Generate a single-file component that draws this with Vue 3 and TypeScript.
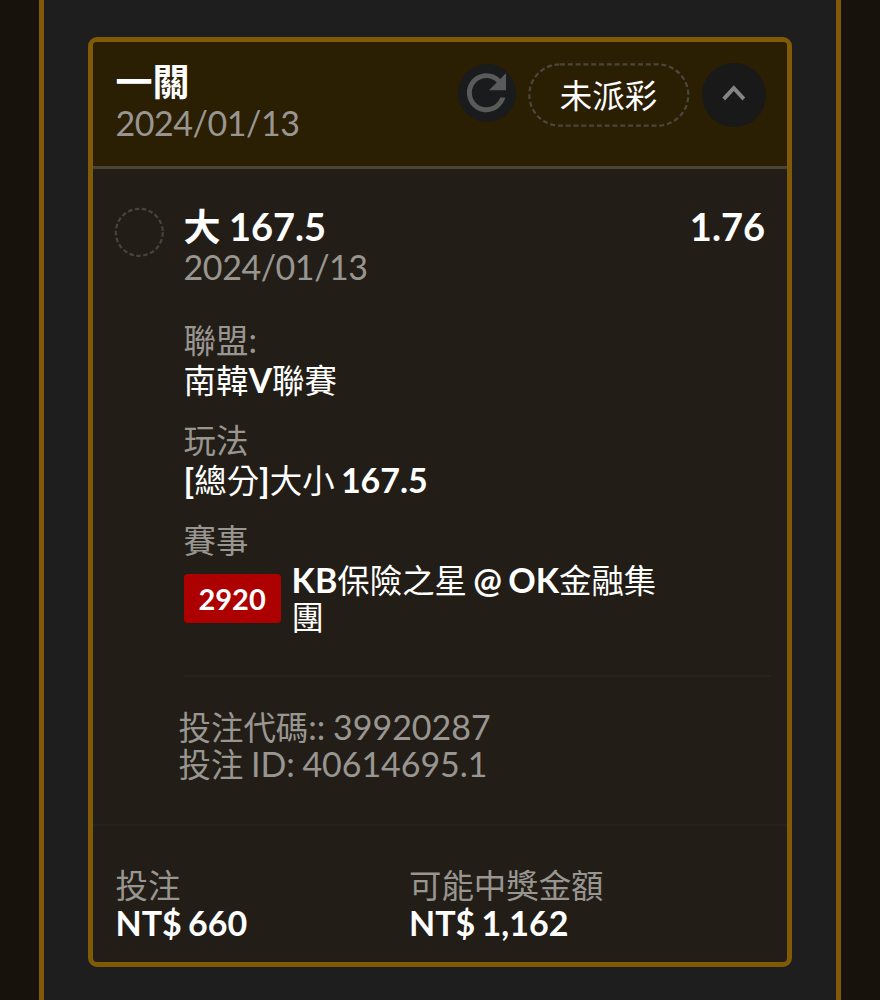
<script setup lang="ts">
import { h, type FunctionalComponent } from 'vue'

/* Renders mixed Latin / Han text, wrapping each Han run so it can be sized separately. */
const Mixed: FunctionalComponent<{ t: string }> = (props) =>
  props.t
    .split(/([\u4e00-\u9fff]+)/)
    .filter((part) => part.length > 0)
    .map((part) => (/[\u4e00-\u9fff]/.test(part) ? h('span', { class: 'han' }, part) : part))
Mixed.props = ['t']

const bet = {
  title: '一關',
  date: '2024/01/13',
  status: '未派彩',
  pick: '大 167.5',
  odds: '1.76',
  code: '投注代碼:: 39920287',
  id: '投注 ID: 40614695.1',
}
const details = [
  { label: '聯盟:', value: '南韓V聯賽' },
  { label: '玩法', value: '[總分]大小 167.5' },
]
const teamLines = ['KB保險之星 @ OK金融集', '團']
const totals = [
  { label: '投注', value: 'NT$ 660' },
  { label: '可能中獎金額', value: 'NT$ 1,162' },
]
</script>

<template>
  <main class="page">
    <section class="panel">
      <article class="card">
        <header class="head">
          <div class="head-text">
            <h1 class="title"><Mixed :t="bet.title" /></h1>
            <p class="muted date">{{ bet.date }}</p>
          </div>
          <button class="refresh" aria-label="refresh">
            <svg width="58" height="58" viewBox="0 0 58 58">
              <path
                transform="translate(-0.8 -0.6) scale(2.44)"
                fill="#5a5a5a"
                d="M17.65 6.35C16.2 4.9 14.21 4 12 4c-4.42 0-7.99 3.58-7.99 8s3.57 8 7.99 8c3.73 0 6.84-2.55 7.73-6h-2.08c-.82 2.33-3.04 4-5.65 4-3.31 0-6-2.69-6-6s2.69-6 6-6c1.66 0 3.14.69 4.22 1.78L13 11h7V4l-2.35 2.35z"
              />
            </svg>
          </button>
          <div class="pill">
            <svg class="ring" width="162" height="64" viewBox="0 0 162 64">
              <rect x="1.3" y="1.3" width="159" height="61.4" rx="30.7" fill="none" stroke="#4a4740" stroke-width="2.2" stroke-dasharray="5 2.8" />
            </svg>
            <span><Mixed :t="bet.status" /></span>
          </div>
          <button class="toggle" aria-label="collapse">
            <svg width="64" height="64" viewBox="0 0 64 64">
              <path
                transform="translate(9 5.8) scale(1.9 2.05)"
                fill="#858585"
                d="M12 8l-6 6 1.41 1.41L12 10.83l4.59 4.58L18 14z"
              />
            </svg>
          </button>
        </header>

        <div class="body">
          <svg class="mark" width="50" height="50" viewBox="0 0 50 50">
            <circle cx="25.3" cy="25.3" r="23.5" fill="none" stroke="#464440" stroke-width="2.2" stroke-dasharray="4.6 2.43" />
          </svg>
          <div class="info">
            <div class="pick-row">
              <h2 class="title"><Mixed :t="bet.pick" /></h2>
              <strong class="title">{{ bet.odds }}</strong>
            </div>
            <p class="muted date">{{ bet.date }}</p>
            <dl class="details">
              <div v-for="d in details" :key="d.label" class="detail">
                <dt class="muted"><Mixed :t="d.label" /></dt>
                <dd class="value"><Mixed :t="d.value" /></dd>
              </div>
              <div class="detail">
                <dt class="muted"><Mixed t="賽事" /></dt>
                <dd class="match">
                  <span class="badge">2920</span>
                  <div class="value teams">
                    <div v-for="line in teamLines" :key="line"><Mixed :t="line" /></div>
                  </div>
                </dd>
              </div>
            </dl>
            <div class="codes">
              <p class="muted"><Mixed :t="bet.code" /></p>
              <p class="muted id"><Mixed :t="bet.id" /></p>
            </div>
          </div>
        </div>

        <footer class="foot">
          <div v-for="t in totals" :key="t.label">
            <p class="muted"><Mixed :t="t.label" /></p>
            <p class="value total">{{ t.value }}</p>
          </div>
        </footer>
      </article>
    </section>
  </main>
</template>

<style>
body {
  margin: 0;
  background: #17130c;
}
.han {
  font-size: 0.954em;
  line-height: 0;
}
</style>

<style scoped>
* {
  box-sizing: border-box;
}
.page {
  height: 1000px;
  padding: 0 39px;
  overflow: hidden;
  background: #17130c;
  color: #fff;
  font: 400 34px/37px Lato, 'Noto Sans CJK TC', sans-serif;
}
h1, h2, p, dl, dd {
  margin: 0;
}
button {
  border: 0;
  padding: 0;
  border-radius: 50%;
}
svg {
  display: block;
}
.panel {
  height: 1000px;
  padding: 37px 44px 0;
  background: #1e1e1e;
  border: solid #805a07;
  border-width: 0 5px;
}
.card {
  height: 930px;
  border: 5px solid #805a07;
  border-radius: 9px;
  background: #221e17;
  overflow: hidden;
}
.head {
  display: flex;
  align-items: flex-start;
  height: 127px;
  padding: 20px 21.5px 0 22.5px;
  background: #2a1e03;
  border-bottom: 3px solid #4b4535;
}
.head-text {
  flex: 1;
}
.title {
  font-size: 38px;
  line-height: 38px;
  font-weight: 700;
}
.title :deep(.han) {
  font-size: 0.975em;
}
.pick-row .title {
  word-spacing: -1px;
}
.muted {
  color: #999692;
  word-spacing: -1px;
}
.date {
  letter-spacing: -0.45px;
}
.head .muted {
  margin-top: 4px;
}
.refresh {
  width: 58px;
  height: 58px;
  margin: 2px 12px 0 0;
  background: #1a1b1d;
}
.pill {
  position: relative;
  width: 162px;
  height: 64px;
  margin: 1px 12px 0 0;
  text-align: center;
  line-height: 64px;
}
.ring {
  position: absolute;
  inset: 0;
}
.toggle {
  width: 64px;
  height: 64px;
  margin-top: 1px;
  background: #191919;
}
.body {
  display: flex;
  height: 655px;
  padding: 38px 16px 0 21px;
}
.mark {
  flex: none;
  margin-right: 19.6px;
}
.info {
  flex: 1;
}
.pick-row {
  display: flex;
  justify-content: space-between;
  padding-right: 6px;
  margin-bottom: 3px;
}
.details {
  display: flex;
  flex-direction: column;
  gap: 23px;
  height: 392px;
  padding-top: 36px;
  border-bottom: 2px solid #26231d;
}
.value {
  font-weight: 700;
  word-spacing: -2px;
}
.value :deep(.han) {
  font-weight: 400;
}
dt {
  margin-bottom: 3px;
}
.match {
  display: flex;
  align-items: flex-start;
}
.badge {
  flex: none;
  width: 97px;
  height: 49px;
  margin: 13px 11px 0 0;
  border-radius: 4px;
  background: #ad0000;
  text-align: center;
  font-size: 29px;
  line-height: 49px;
  font-weight: 700;
}
.teams {
  white-space: nowrap;
}
.codes {
  margin: 31px 0 0 -5px;
}
.id {
  letter-spacing: -0.05px;
}
.foot {
  display: grid;
  grid-template-columns: 293.5px 1fr;
  height: 140px;
  padding: 40px 0 0 22.5px;
  border-top: 2px solid #26231d;
}
.total {
  margin-top: 1px;
}
</style>
